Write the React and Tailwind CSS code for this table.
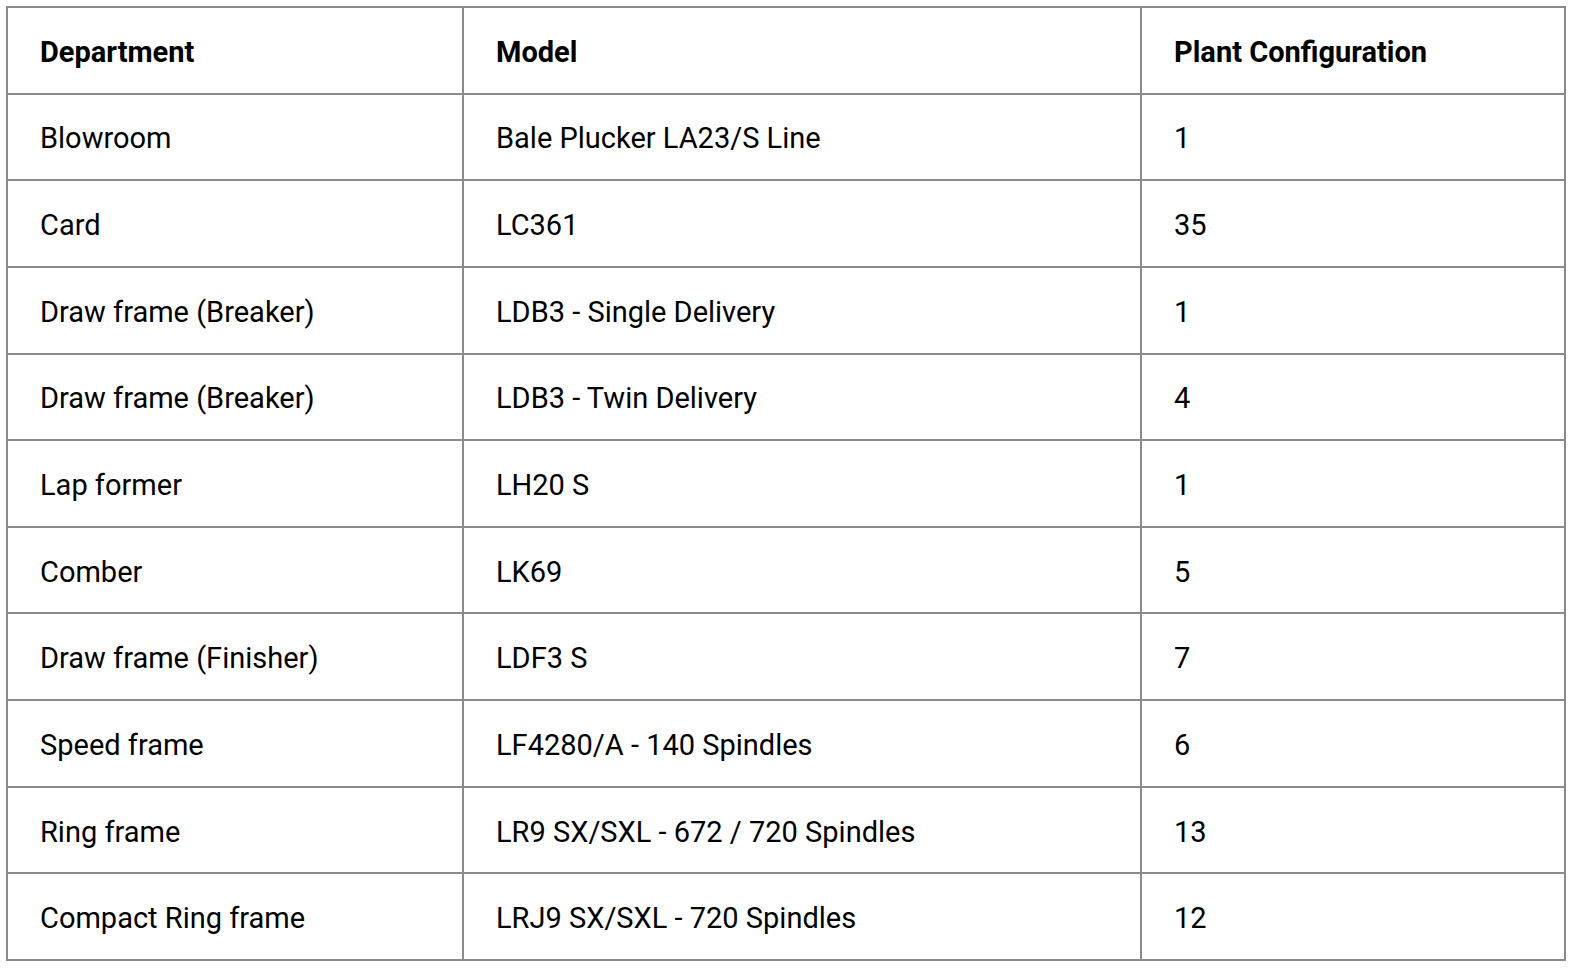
const rows = [
  ['Blowroom', 'Bale Plucker LA23/S Line', '1'],
  ['Card', 'LC361', '35'],
  ['Draw frame (Breaker)', 'LDB3 - Single Delivery', '1'],
  ['Draw frame (Breaker)', 'LDB3 - Twin Delivery', '4'],
  ['Lap former', 'LH20 S', '1'],
  ['Comber', 'LK69', '5'],
  ['Draw frame (Finisher)', 'LDF3 S', '7'],
  ['Speed frame', 'LF4280/A - 140 Spindles', '6'],
  ['Ring frame', 'LR9 SX/SXL - 672 / 720 Spindles', '13'],
  ['Compact Ring frame', 'LRJ9 SX/SXL - 720 Spindles', '12'],
]

export default function App() {
  return (
    <div className="min-h-screen bg-white pt-[6px] pl-[6px] font-['Roboto',sans-serif] text-black">
      <table className="w-[1558px] border-collapse table-fixed text-[29px] leading-none">
        <colgroup>
          <col className="w-[456px]" />
          <col className="w-[678px]" />
          <col className="w-[424px]" />
        </colgroup>
        <thead>
          <tr className="h-[86.65px]">
            <th className="border-2 border-[#8a8a8a] px-[32px] pt-[4px] text-left font-bold">Department</th>
            <th className="border-2 border-[#8a8a8a] px-[32px] pt-[4px] text-left font-bold">Model</th>
            <th className="border-2 border-[#8a8a8a] px-[32px] pt-[4px] text-left font-bold">Plant Configuration</th>
          </tr>
        </thead>
        <tbody>
          {rows.map((r, i) => (
            <tr key={i} className="h-[86.65px]">
              {r.map((c, j) => (
                <td key={j} className="border-2 border-[#8a8a8a] px-[32px] pt-[4px]">{c}</td>
              ))}
            </tr>
          ))}
        </tbody>
      </table>
    </div>
  )
}
